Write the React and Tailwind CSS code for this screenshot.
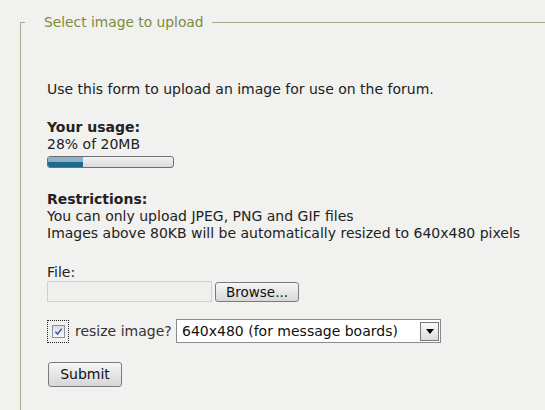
export default function App() {
  return (
    <div className="min-h-[410px] w-[545px] overflow-hidden bg-[#f1f1ef] font-['DejaVu_Sans',Verdana,sans-serif] text-[14px] leading-[17px] text-[#222]">
      <div className="pl-[20px] pt-[13px]">
        <div className="flex h-[18px] items-center">
          <div className="h-px w-[5px] bg-[#a7ad8a]" />
          <span className="pl-[19px] pr-[8px] text-[13.8px] text-[#7b8c3c]">Select image to upload</span>
          <div className="h-px flex-1 bg-[#a7ad8a]" />
        </div>
        <div className="-mt-[9px] min-h-[400px] border-l border-[#a7ad8a] pl-[26px] pt-[59px]">
          <p>Use this form to upload an image for use on the forum.</p>

          <div className="mt-[21px]">
            <p className="font-bold">Your usage:</p>
            <p>28% of 20MB</p>
            <div className="mt-[3px] flex h-[12px] w-[127px] overflow-hidden rounded-[3px] border border-[#6f6f6f] bg-gradient-to-b from-[#f2f2f2] to-[#d9d9d9]">
              <div className="flex w-[35px] flex-col">
                <div className="h-1/2 bg-[#8fb0c2]" />
                <div className="h-1/2 bg-[#1d6a90]" />
              </div>
            </div>
          </div>

          <div className="mt-[23px]">
            <p className="font-bold">Restrictions:</p>
            <p>You can only upload JPEG, PNG and GIF files</p>
            <p>Images above 80KB will be automatically resized to 640x480 pixels</p>
          </div>

          <div className="mt-[22px]">
            <p>File:</p>
            <div className="flex items-start gap-[3px]">
              <div className="h-[21px] w-[165px] border border-[#d0d0d0] bg-[#efefed]" />
              <button className="mt-[1px] h-[20px] w-[84px] rounded-[3px] border border-[#7a7a7a] bg-gradient-to-b from-[#f6f6f6] to-[#d8d8d8] text-[13.5px] leading-[16px] text-[#111]">
                Browse...
              </button>
            </div>
          </div>

          <div className="mt-[17px] flex items-center">
            <div className="flex h-[23px] w-[22px] items-center justify-center border border-dotted border-[#222]">
              <div className="flex h-[13px] w-[13px] items-center justify-center border border-[#8f8f9d] bg-gradient-to-b from-[#dcdcec] to-[#f6f6fb]">
                <svg viewBox="0 0 10 10" className="h-[9px] w-[9px]">
                  <path d="M1.5 5.2 L4 7.8 L8.5 1.8" fill="none" stroke="#3d55a8" strokeWidth="1.6" />
                </svg>
              </div>
            </div>
            <span className="ml-[6px] text-[#333]">resize image?</span>
            <div className="ml-auto mr-[104px] flex h-[24px] w-[265px] items-center border border-[#8a8a8a] bg-white pl-[5px] pr-[1px]">
              <span className="flex-1 text-[#111]">640x480 (for message boards)</span>
              <div className="flex h-[19px] w-[19px] items-center justify-center border border-[#777] bg-gradient-to-b from-[#fafafa] to-[#dcdcdc]">
                <svg viewBox="0 0 8 5" className="h-[5px] w-[8px]">
                  <path d="M0 0 H8 L4 5 Z" fill="#000" />
                </svg>
              </div>
            </div>
          </div>

          <button className="ml-[1px] mt-[19px] h-[25px] w-[74px] rounded-[3px] border border-[#7a7a7a] bg-gradient-to-b from-[#f6f6f6] to-[#d6d6d6] text-[14px] text-[#111]">
            Submit
          </button>
        </div>
      </div>
    </div>
  );
}
